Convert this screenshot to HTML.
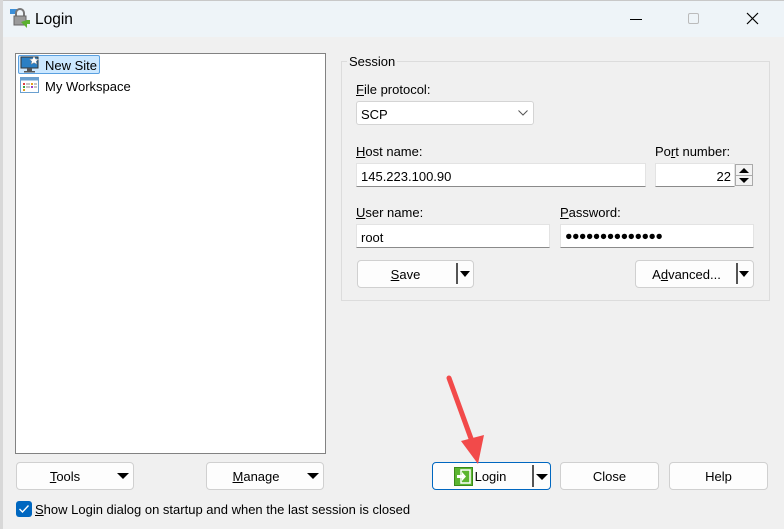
<!DOCTYPE html>
<html><head><style>
*{box-sizing:border-box;margin:0;padding:0}
body{width:784px;height:529px;background:#f0f0f0;font-family:"Liberation Sans",sans-serif;font-size:13px;color:#000;position:relative;overflow:hidden}
.a{position:absolute}
.t{font-size:13px}
.tb{left:0;top:0;width:784px;height:37px;background:#eef4f8;border-top:1px solid #c8c8c8}
.in{background:#fff;border:1px solid #e3e3e3;border-bottom:1px solid #8a8a8a;height:24px;padding:5px 4px;font-size:13px}
.btn{background:#fdfdfd;border:1px solid #d0d0d0;border-radius:4px;height:28px;text-align:center;line-height:27px;font-size:13px}
.tri{position:absolute;width:0;height:0;border-style:solid;border-color:#000 transparent transparent transparent}
u{text-decoration:underline}
</style></head><body>
<div class="a tb"></div>
<div class="a" style="left:0;top:0;width:3px;height:529px;background:#d8d8d8"></div>
<svg class="a" style="left:9px;top:8px" width="22" height="22" viewBox="0 0 22 22">
<rect x="1" y="1" width="7" height="5" fill="#3b8fd8"/>
<path d="M7 8 v-3 a4 4 0 0 1 8 0 v3" fill="none" stroke="#777" stroke-width="2"/>
<rect x="5" y="8" width="12" height="9" fill="#9a9a9a" stroke="#666"/>
<path d="M12 14 l6 6 v-4 h3 v-4 h-3 z" fill="#5bb030"/>
</svg>
<div class="a" style="left:35px;top:11px;font-size:15.5px">Login</div>
<div class="a" style="left:630px;top:19px;width:12px;height:1px;background:#000"></div>
<div class="a" style="left:688px;top:13px;width:11px;height:11px;border:1px solid #bbb;border-radius:2px"></div>
<svg class="a" style="left:746px;top:12px" width="13" height="13"><path d="M1 1L12 12M12 1L1 12" stroke="#000" stroke-width="1.2"/></svg>

<div class="a" style="left:15px;top:53px;width:311px;height:401px;background:#fff;border:1px solid #828282"></div>
<div class="a" style="left:18px;top:55px;width:82px;height:19px;background:#cce8ff;border:1px solid #5aa0e0;border-radius:2px"></div>
<svg class="a" style="left:20px;top:56px" width="20" height="17"><rect x="1" y="1" width="17" height="11" fill="#2a7fc4" stroke="#333"/><rect x="7" y="12" width="5" height="3" fill="#555"/><rect x="4" y="15" width="11" height="1.5" fill="#555"/><path d="M14 0l1.5 3 3 .3-2.3 2 .7 3-2.9-1.6-2.9 1.6.7-3-2.3-2 3-.3z" fill="#fff" stroke="#888" stroke-width=".5"/></svg>
<div class="a t" style="left:45px;top:58px">New Site</div>
<svg class="a" style="left:20px;top:77px" width="19" height="16"><rect x=".5" y=".5" width="18" height="15" fill="#fff" stroke="#6aa0d0"/><rect x=".5" y=".5" width="18" height="3" fill="#6aa0d0"/><rect x="3" y="6" width="2" height="2" fill="#e04040"/><rect x="3" y="9" width="2" height="2" fill="#40a040"/><rect x="3" y="12" width="2" height="2" fill="#e0a020"/><rect x="11" y="6" width="2" height="2" fill="#e0a020"/><rect x="11" y="9" width="2" height="2" fill="#a040c0"/><rect x="6" y="6.5" width="4" height="1" fill="#888"/><rect x="6" y="9.5" width="4" height="1" fill="#888"/><rect x="14" y="6.5" width="3" height="1" fill="#888"/><rect x="14" y="9.5" width="3" height="1" fill="#888"/></svg>
<div class="a t" style="left:45px;top:79px">My Workspace</div>

<div class="a" style="left:341px;top:61px;width:429px;height:240px;border:1px solid #dcdcdc"></div>
<div class="a t" style="left:347px;top:54px;background:#f0f0f0;padding:0 2px">Session</div>
<div class="a t" style="left:356px;top:82px"><u>F</u>ile protocol:</div>
<div class="a" style="left:356px;top:101px;width:178px;height:24px;background:#fff;border:1px solid #d4d4d4;border-radius:3px;padding:5px 4px;font-size:13px">SCP</div>
<svg class="a" style="left:518px;top:110px" width="10" height="6"><path d="M.5 .5L5 5 9.5.5" fill="none" stroke="#555"/></svg>
<div class="a t" style="left:356px;top:144px"><u>H</u>ost name:</div>
<div class="a t" style="left:655px;top:144px">Po<u>r</u>t number:</div>
<div class="a in" style="left:356px;top:163px;width:290px">145.223.100.90</div>
<div class="a in" style="left:655px;top:163px;width:80px;text-align:right;padding-right:3px">22</div>
<div class="a" style="left:735px;top:164px;width:18px;height:22px;background:#f3f3f3;border:1px solid #aaa"></div>
<div class="a" style="left:736px;top:175px;width:16px;height:1px;background:#aaa"></div>
<div class="tri" style="left:739px;top:168px;border-width:0 5px 5px;border-color:transparent transparent #000 transparent"></div>
<div class="tri" style="left:739px;top:178px;border-width:5px 5px 0"></div>
<div class="a t" style="left:356px;top:205px"><u>U</u>ser name:</div>
<div class="a t" style="left:560px;top:205px"><u>P</u>assword:</div>
<div class="a in" style="left:356px;top:224px;width:194px">root</div>
<div class="a in" style="left:560px;top:224px;width:194px;font-size:12.5px;letter-spacing:-0.6px;padding-top:4px">●●●●●●●●●●●●●●</div>
<div class="a btn" style="left:357px;top:260px;width:117px;padding-right:20px"><u>S</u>ave</div>
<div class="a" style="left:456px;top:263px;width:2px;height:21px;background:#555"></div>
<div class="tri" style="left:460px;top:271px;border-width:6px 5px 0"></div>
<div class="a btn" style="left:635px;top:260px;width:119px;padding-right:16px">A<u>d</u>vanced...</div>
<div class="a" style="left:736px;top:263px;width:2px;height:21px;background:#555"></div>
<div class="tri" style="left:739px;top:271px;border-width:6px 5px 0"></div>

<div class="a btn" style="left:16px;top:462px;width:118px;padding-right:20px"><u>T</u>ools</div>
<div class="tri" style="left:117px;top:473px;border-width:6px 6px 0"></div>
<div class="a btn" style="left:206px;top:462px;width:118px;padding-right:18px"><u>M</u>anage</div>
<div class="tri" style="left:307px;top:473px;border-width:6px 6px 0"></div>

<div class="a btn" style="left:432px;top:462px;width:119px;border-color:#0067c0;padding-right:20px;padding-left:18px">Login</div>
<svg class="a" style="left:454px;top:467px" width="19" height="19"><rect x=".5" y=".5" width="18" height="18" fill="#5cb531" stroke="#3a8a1a"/><rect x="7" y="3" width="9" height="13" fill="none" stroke="#fff" stroke-width="1.5"/><path d="M3 8h5v-3l4 4.5-4 4.5v-3H3z" fill="#fff"/></svg>
<div class="a" style="left:532px;top:465px;width:2px;height:22px;background:#555"></div>
<div class="tri" style="left:536px;top:474px;border-width:6px 6px 0"></div>
<div class="a btn" style="left:560px;top:462px;width:99px">Close</div>
<div class="a btn" style="left:669px;top:462px;width:99px">Help</div>

<svg class="a" style="left:440px;top:372px" width="50" height="95"><path d="M9 6L33 72" stroke="#f24a4a" stroke-width="5" stroke-linecap="round"/><path d="M21 69L38 92 44 63z" fill="#f24a4a"/></svg>

<div class="a" style="left:16px;top:501px;width:16px;height:16px;background:#0067c0;border-radius:3px"></div>
<svg class="a" style="left:18px;top:504px" width="12" height="10"><path d="M1.5 5L4.5 8 10.5 1.5" fill="none" stroke="#fff" stroke-width="1.4"/></svg>
<div class="a t" style="left:35px;top:502px"><u>S</u>how Login dialog on startup and when the last session is closed</div>
</body></html>
